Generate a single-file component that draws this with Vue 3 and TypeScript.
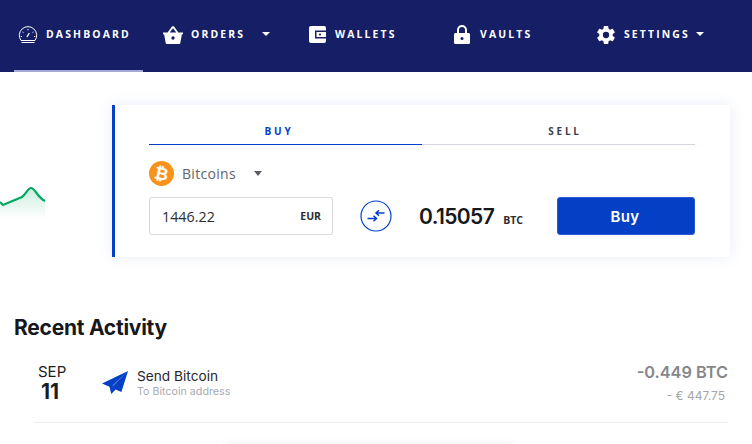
<template>
  <div class="page">
    <header class="nav">
      <a v-for="item in navItems" :key="item.label" class="nav-item" :class="item.cls">
        <svg v-if="item.icon === 'gauge'" class="nav-icon" width="20" height="18" viewBox="0 0 20 18" fill="none" stroke="#fff" stroke-width="1">
          <path d="M3 14.500a8.700 8.700 0 1 1 14 0z" />
          <path d="M3.500 16.500h13" />
          <path d="M8.800 11l2.600-3.800" stroke-width="1.300" />
          <path d="M10 3v1.200M4.500 6l1 .7M15.500 6l-1 .7M2.800 10.500H4M17.200 10.500H16" />
        </svg>
        <svg v-else-if="item.icon === 'basket'" class="nav-icon" width="20" height="18" viewBox="0 0 20 18">
          <path fill="#fff" d="M0 6.500h4.600L9 .6c.5-.6 1.500-.6 2 0l4.400 5.900H20v1.700h-1.100L17.300 17c-.1.600-.6 1-1.200 1H3.900c-.6 0-1.100-.4-1.200-1L1.100 8.200H0zM6.700 6.500h6.600L10 2.200z" />
          <circle cx="10" cy="12" r="1.700" fill="#161f66" />
        </svg>
        <svg v-else-if="item.icon === 'wallet'" class="nav-icon" width="17" height="17" viewBox="0 0 17 17">
          <rect width="17" height="17" rx="2" fill="#fff" />
          <rect x="6" y="4.500" width="11" height="8" fill="#161f66" />
          <rect x="7.500" y="6" width="9.500" height="5" fill="#fff" />
          <circle cx="11" cy="8.500" r="1.100" fill="#161f66" />
        </svg>
        <svg v-else-if="item.icon === 'lock'" class="nav-icon" width="16" height="19" viewBox="0 0 16 19">
          <path fill="#fff" d="M3 8V5a5 5 0 0 1 10 0v3h1.400c.9 0 1.600.7 1.600 1.600v7.800c0 .9-.7 1.600-1.600 1.600H1.600C.7 19 0 18.300 0 17.400V9.600C0 8.700.7 8 1.600 8zM5 8h6V5a3 3 0 0 0-6 0z" />
          <circle cx="8" cy="13.500" r="1.500" fill="#161f66" />
        </svg>
        <svg v-else class="nav-icon" width="18" height="18" viewBox="2 2 20 20">
          <path fill="#fff" d="M19.430 12.980c.04-.32.07-.64.07-.98s-.03-.66-.07-.98l2.110-1.650c.19-.15.240-.42.120-.64l-2-3.460c-.12-.22-.390-.3-.61-.22l-2.490 1c-.52-.4-1.080-.73-1.690-.98l-.38-2.650A.49.49 0 0 0 14 2h-4c-.25 0-.46.180-.49.420l-.38 2.650c-.61.25-1.170.59-1.690.98l-2.490-1c-.23-.09-.49 0-.61.220l-2 3.460c-.13.220-.07.490.12.640l2.110 1.650c-.04.320-.07.650-.07.980s.03.660.07.980l-2.110 1.650c-.19.150-.24.420-.12.640l2 3.460c.12.220.39.300.61.220l2.490-1c.52.400 1.080.730 1.690.980l.38 2.650c.03.240.24.420.49.420h4c.25 0 .46-.18.49-.42l.38-2.650c.61-.25 1.170-.59 1.690-.98l2.490 1c.23.090.49 0 .61-.22l2-3.460c.12-.22.070-.49-.12-.64zM12 15.500a3.500 3.500 0 1 1 0-7 3.500 3.500 0 0 1 0 7z" />
        </svg>
        <span class="nav-label">{{ item.label }}</span>
        <i v-if="item.caret" class="nav-caret"></i>
      </a>
    </header>

    <main class="content">
      <svg class="spark" width="46" height="40" viewBox="0 0 46 40">
        <defs>
          <linearGradient id="sparkFill" x1="0" y1="0" x2="0" y2="1">
            <stop offset="0" stop-color="#00a65a" stop-opacity="0.2" />
            <stop offset="1" stop-color="#00a65a" stop-opacity="0" />
          </linearGradient>
        </defs>
        <path fill="url(#sparkFill)" d="M0 17l3 3 7-3 12-5c4-3 6-9 9-9 4 0 6 9 14 13v18H0z" />
        <path fill="none" stroke="#00a860" stroke-width="2.200" d="M0 17l3 3 7-3 12-5c4-3 6-9 9-9 4 0 6 9 14 13" />
      </svg>

      <section class="trade">
        <div class="tabs">
          <div class="tab tab-active">BUY</div>
          <div class="tab tab-idle">SELL</div>
        </div>
        <div class="coin-row">
          <svg width="25" height="25" viewBox="0 0 25 25">
            <circle cx="12.500" cy="12.500" r="12.500" fill="#f7931a" />
            <text x="12.500" y="18.500" text-anchor="middle" transform="rotate(12 12.500 12.500)" class="coin-glyph">₿</text>
          </svg>
          <span class="coin-name">Bitcoins</span>
          <i class="coin-caret"></i>
        </div>
        <div class="trade-row">
          <div class="amount-box">
            <span class="amount">1446.22</span>
            <span class="currency">EUR</span>
          </div>
          <svg class="swap" width="32" height="32" viewBox="0 0 32 32" fill="none" stroke="#0440c6">
            <circle cx="16" cy="16" r="15" stroke-width="1.200" />
            <path d="M7.500 18.500h9M13.500 15.800l3 2.700-3 2.700" stroke-width="1.500" />
            <path d="M24.500 13h-8.500M19 10.300L16 13l3 2.700" stroke-width="1.500" />
          </svg>
          <div class="result">
            <span class="result-value">0.15057</span>
            <span class="result-unit">BTC</span>
          </div>
          <button class="buy-btn">Buy</button>
        </div>
      </section>

      <h2 class="recent-title">Recent Activity</h2>
      <div class="activity">
        <div class="date">
          <span class="month">SEP</span>
          <span class="day">11</span>
        </div>
        <svg class="plane" width="26" height="23" viewBox="0 0 26 23">
          <path fill="#0440c6" d="M26 0L0 12.500l7.500 3.300 1.800 7.200 4.300-4.500 5.800 2.500z" />
          <path fill="#fff" d="M9.300 23l1-7L26 0 10.900 13.800z" opacity="0.35" />
        </svg>
        <div class="activity-text">
          <div class="activity-name">Send Bitcoin</div>
          <div class="activity-sub">To Bitcoin address</div>
        </div>
        <div class="activity-amounts">
          <div class="btc-amount">-0.449 BTC</div>
          <div class="eur-amount">- € 447.75</div>
        </div>
      </div>
      <div class="next-card"></div>
    </main>
  </div>
</template>

<script setup lang="ts">
interface NavItem {
  label: string;
  icon: string;
  cls: string;
  caret?: boolean;
}

const navItems: NavItem[] = [
  { label: "DASHBOARD", icon: "gauge", cls: "nav-dashboard" },
  { label: "ORDERS", icon: "basket", cls: "nav-orders", caret: true },
  { label: "WALLETS", icon: "wallet", cls: "nav-wallets" },
  { label: "VAULTS", icon: "lock", cls: "nav-vaults" },
  { label: "SETTINGS", icon: "gear", cls: "nav-settings", caret: true },
];
</script>

<style scoped>
.page {
  width: 752px;
  height: 444px;
  overflow: hidden;
  background: #fff;
  font-family: "Open Sans", sans-serif;
}

.nav {
  height: 72px;
  background: #161f66;
  display: flex;
  padding-left: 14px;
  box-sizing: border-box;
}

.nav-item {
  display: flex;
  align-items: center;
  height: 70px;
  color: #fff;
  box-sizing: content-box;
}

.nav-dashboard {
  width: 125px;
  padding-left: 4px;
  border-bottom: 2px solid #a5a9d8;
}

.nav-orders {
  margin-left: 20px;
  width: 146px;
}

.nav-wallets {
  width: 145px;
}

.nav-vaults {
  width: 143px;
}

.nav-icon {
  flex: none;
  margin-top: -1px;
}

.nav-label {
  margin-left: 8px;
  margin-top: -2px;
  font-size: 10.400px;
  font-weight: 700;
  letter-spacing: 2.150px;
}

.nav-wallets .nav-label,
.nav-settings .nav-label {
  margin-left: 9px;
}

.nav-vaults .nav-label {
  margin-left: 10px;
}

.nav-caret {
  width: 0;
  height: 0;
  margin-top: -2px;
  border-left: 4px solid transparent;
  border-right: 4px solid transparent;
  border-top: 4.500px solid #fff;
}

.nav-orders .nav-caret {
  margin-left: 17px;
}

.nav-settings .nav-caret {
  margin-left: 6px;
}

.content {
  position: relative;
  height: 372px;
  padding-top: 33px;
  box-sizing: border-box;
}

.spark {
  position: absolute;
  left: 0;
  top: 113px;
}

.trade {
  margin-left: 112px;
  width: 618px;
  height: 152px;
  box-sizing: border-box;
  border-left: 3px solid #0440c6;
  padding: 14px 35px 0 34px;
  background: #fff;
  box-shadow: 0 0 14px rgba(60, 90, 190, 0.1);
}

.tabs {
  display: flex;
}

.tab {
  flex: 1;
  height: 26px;
  text-align: center;
  font-size: 10px;
  font-weight: 700;
  letter-spacing: 2.800px;
  line-height: 24px;
  color: #3d4048;
  border-bottom: 1px solid #d4d6e4;
  box-sizing: border-box;
}

.tab-active {
  padding-right: 13px;
  color: #0440c6;
  border-bottom-color: #0440c6;
}

.tab-idle {
  padding-left: 13px;
}

.coin-row {
  display: flex;
  align-items: center;
  margin-top: 16px;
}

.coin-name {
  margin-left: 8px;
  font-size: 14px;
  color: #62656c;
  letter-spacing: 0.300px;
}

.coin-caret {
  margin-left: 18px;
  width: 0;
  height: 0;
  border-left: 4.500px solid transparent;
  border-right: 4.500px solid transparent;
  border-top: 5px solid #5a5d66;
}

.coin-glyph {
  font-family: "DejaVu Sans", sans-serif;
  font-size: 17px;
  font-weight: 700;
  fill: #fff;
}

.trade-row {
  display: flex;
  align-items: center;
  margin-top: 11px;
}

.amount-box {
  width: 184px;
  height: 38px;
  box-sizing: border-box;
  border: 1px solid #d7d8dc;
  border-radius: 3px;
  display: flex;
  align-items: center;
  justify-content: space-between;
  padding: 0 11px 0 12px;
}

.amount {
  font-size: 14.300px;
  color: #2c2d30;
}

.currency {
  font-size: 10.500px;
  font-weight: 700;
  color: #2c2d30;
}

.swap {
  margin-left: 27px;
  flex: none;
}

.result {
  margin-left: 27px;
  width: 138px;
  display: flex;
  align-items: baseline;
}

.result-value {
  font-family: Inter, sans-serif;
  font-size: 21px;
  font-weight: 600;
  letter-spacing: -0.600px;
  color: #17181c;
}

.result-unit {
  margin-left: 9px;
  font-size: 10.500px;
  font-weight: 700;
  color: #2c2d30;
}

.buy-btn {
  width: 138px;
  height: 38px;
  border: 1px solid #2a5ad2;
  border-radius: 3px;
  background: #0440c6;
  color: #fff;
  font-family: Inter, sans-serif;
  font-size: 15px;
  font-weight: 600;
  letter-spacing: 0.300px;
  padding: 0 2px 0 0;
}

.recent-title {
  margin: 57px 0 0 14px;
  font-family: Inter, sans-serif;
  font-size: 21px;
  font-weight: 700;
  letter-spacing: -0.250px;
  line-height: 28px;
  color: #17181c;
}

.activity {
  margin: 18px 24px 0 34px;
  height: 62px;
  display: flex;
  align-items: flex-start;
  border-bottom: 1px solid #e8eeee;
  box-sizing: content-box;
}

.date {
  width: 68px;
  padding-left: 4px;
  box-sizing: border-box;
  display: flex;
  flex-direction: column;
  color: #1c1d20;
  font-family: Inter, sans-serif;
}

.month {
  font-size: 15px;
  line-height: 17px;
  margin-top: 3px;
}

.day {
  font-size: 21px;
  font-weight: 700;
  line-height: 23px;
  padding-left: 3px;
}

.plane {
  margin-top: 11px;
  flex: none;
}

.activity-text {
  margin-left: 9px;
  margin-top: 7px;
  font-family: Inter, sans-serif;
}

.activity-name {
  font-size: 13.700px;
  line-height: 18px;
  color: #26272b;
}

.activity-sub {
  font-size: 10.700px;
  line-height: 13px;
  color: #a8abb0;
}

.activity-amounts {
  margin-left: auto;
  text-align: right;
  font-family: Inter, sans-serif;
}

.btc-amount {
  font-size: 16.300px;
  font-weight: 600;
  line-height: 24px;
  color: #85878b;
}

.eur-amount {
  margin-top: 4px;
  margin-right: 3px;
  font-size: 12px;
  line-height: 16px;
  color: #a5a7ab;
}

.next-card {
  margin: 21px 237px 0 225px;
  height: 40px;
  box-shadow: 0 0 8px rgba(60, 60, 90, 0.07);
}
</style>
